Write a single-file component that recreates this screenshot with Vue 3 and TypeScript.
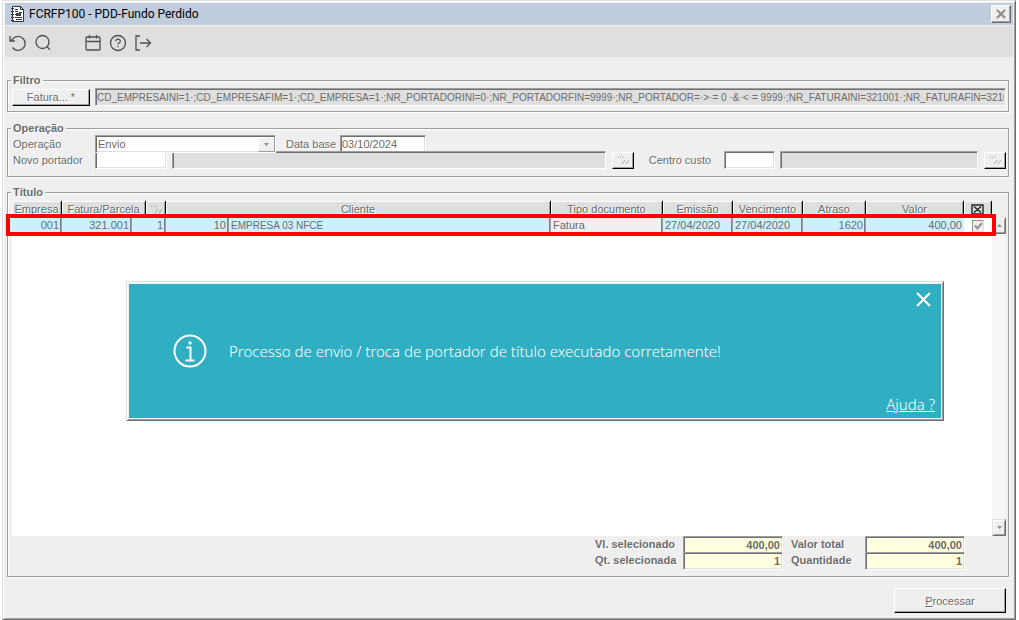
<script setup lang="ts">
import { ref } from 'vue'

interface Titulo {
  empresa: string
  fatura: string
  parcela: string
  codigo: string
  cliente: string
  tipo: string
  emissao: string
  vencimento: string
  atraso: string
  valor: string
  marcado: boolean
}

const filtro =
  'CD_EMPRESAINI=1·;CD_EMPRESAFIM=1·;CD_EMPRESA=1·;NR_PORTADORINI=0·;NR_PORTADORFIN=9999·;NR_PORTADOR=·>·= 0 ·&·<·= 9999·;NR_FATURAINI=321001·;NR_FATURAFIN=321001'

const operacao = ref('Envio')
const dataBase = ref('03/10/2024')
const portador = ref('')
const centro = ref('')
const avisoAberto = ref(true)

const titulos = ref<Titulo[]>([
  {
    empresa: '001',
    fatura: '321.001',
    parcela: '1',
    codigo: '10',
    cliente: 'EMPRESA 03 NFCE',
    tipo: 'Fatura',
    emissao: '27/04/2020',
    vencimento: '27/04/2020',
    atraso: '1620',
    valor: '400,00',
    marcado: true,
  },
])
</script>

<template>
  <main class="window">
    <header class="titlebar">
      <svg class="app-icon" viewBox="0 0 13 16" aria-hidden="true">
        <path d="M1.500 .5h8l3 3v12h-11z" fill="#fff" stroke="#333" />
        <path d="M9.500 .5v3h3M0 2.500h3M0 5.500h3M0 8.500h3M0 11.500h3M0 14.500h3M4 3.500h3M4 5.500h3M8 6.500h3M4 8.500h3M4 11.500h7M5 13.500h6" fill="none" stroke="#333" />
        <path d="M5 7h5v3h-5z" fill="#444" />
      </svg>
      <h1>FCRFP100 - PDD-Fundo Perdido</h1>
      <button type="button" class="close" aria-label="Fechar">
        <svg viewBox="0 0 10 10"><path d="M1 1l8 8M9 1l-8 8" stroke="#8d8d8d" stroke-width="2.200" /></svg>
      </button>
    </header>

    <nav class="toolbar" aria-label="Ferramentas">
      <button type="button" aria-label="Desfazer">
        <svg viewBox="0 0 18 18"><path d="M1 2v5h5M1.500 7l2.700-2.500A7 7 0 1 1 3.500 13.500" /></svg>
      </button>
      <button type="button" aria-label="Pesquisar">
        <svg viewBox="0 0 18 18"><circle cx="8.500" cy="8" r="6.500" /><path d="M13 12.800l3 3" /></svg>
      </button>
      <button type="button" class="spaced" aria-label="Calendário">
        <svg viewBox="0 0 18 18"><rect x="2" y="3" width="14" height="13" rx="1" /><path d="M2 7.500h14M5.500 1v3.500M12.500 1v3.500" /></svg>
      </button>
      <button type="button" aria-label="Ajuda">
        <svg viewBox="0 0 18 18"><circle cx="9" cy="9" r="7.500" /><path d="M6.800 7.300c0-3 4.700-3 4.500 0 0 1.500-2.300 1.500-2.300 3.200M9 12v1.300" /></svg>
      </button>
      <button type="button" aria-label="Sair">
        <svg viewBox="0 0 18 18"><path d="M6 2H2v14h4M6 9h10.500M12.500 5l4 4-4 4" /></svg>
      </button>
    </nav>

    <section class="group filter" aria-labelledby="t-filtro">
      <h2 id="t-filtro">Filtro</h2>
      <div class="line">
        <button type="button" class="push fatura">Fatura... *</button>
        <input class="field muted grow small" type="text" readonly :value="filtro" aria-label="Filtro de fatura" />
      </div>
    </section>

    <section class="group operation" aria-labelledby="t-operacao">
      <h2 id="t-operacao">Operação</h2>
      <div class="line">
        <label class="lead" for="operacao">Operação</label>
        <span class="select-box">
          <select id="operacao" v-model="operacao" class="field">
            <option>Envio</option>
          </select>
          <span class="drop" aria-hidden="true"><svg viewBox="0 0 7 4"><path d="M0 0h7L3.500 4z" /></svg></span>
        </span>
        <label class="date-label" for="data">Data base</label>
        <input id="data" v-model="dataBase" class="field date" type="text" />
      </div>
      <div class="line">
        <label class="lead" for="portador">Novo portador</label>
        <input id="portador" v-model="portador" class="field code" type="text" />
        <input class="field muted holder" type="text" readonly aria-label="Nome do portador" />
        <button type="button" class="push lookup" aria-label="Buscar portador">
          <svg viewBox="0 0 12 10"><path d="M1 2h1M4 1h1M3 3h1M6 2h1M5 9l3-4M9 9l3-4" /></svg>
        </button>
        <label class="cost-label" for="centro">Centro custo</label>
        <input id="centro" v-model="centro" class="field cost" type="text" />
        <input class="field muted center" type="text" readonly aria-label="Nome do centro de custo" />
        <button type="button" class="push lookup" aria-label="Buscar centro de custo">
          <svg viewBox="0 0 12 10"><path d="M1 2h1M4 1h1M3 3h1M6 2h1M5 9l3-4M9 9l3-4" /></svg>
        </button>
      </div>
    </section>

    <section class="group titles" aria-labelledby="t-titulo">
      <h2 id="t-titulo">Título</h2>
      <div class="grid-box">
        <div class="sheet">
          <table>
            <colgroup>
              <col class="c50" /><col class="c70" /><col class="c14" /><col class="c20" /><col class="c63" /><col />
              <col class="c112" /><col class="c70" /><col class="c70" /><col class="c63" /><col class="c98" /><col class="c28" />
            </colgroup>
            <thead>
              <tr>
                <th scope="col">Empresa</th>
                <th scope="col" colspan="2">Fatura/Parcela</th>
                <th scope="col" aria-label="Detalhe">
                  <svg class="mark" viewBox="0 0 12 10"><path d="M1 2h1M4 1h1M3 3h1M6 2h1M5 9l3-4M9 9l3-4" /></svg>
                </th>
                <th scope="col" colspan="2">Cliente</th>
                <th scope="col">Tipo documento</th>
                <th scope="col">Emissão</th>
                <th scope="col">Vencimento</th>
                <th scope="col">Atraso</th>
                <th scope="col">Valor</th>
                <th scope="col" aria-label="Selecionar">
                  <svg class="cross" viewBox="0 0 13 11"><path d="M1 1h11v9H1zM3 2.500l7 6M10 2.500l-7 6" /></svg>
                </th>
              </tr>
            </thead>
            <tbody>
              <tr v-for="t in titulos" :key="t.fatura">
                <td class="num">{{ t.empresa }}</td>
                <td class="num">{{ t.fatura }}</td>
                <td class="num" colspan="2">{{ t.parcela }}</td>
                <td class="num">{{ t.codigo }}</td>
                <td class="small">{{ t.cliente }}</td>
                <td class="plain">{{ t.tipo }}</td>
                <td>{{ t.emissao }}</td>
                <td>{{ t.vencimento }}</td>
                <td class="num">{{ t.atraso }}</td>
                <td class="num last">{{ t.valor }}</td>
                <td class="tick">
                  <label class="check">
                    <input v-model="t.marcado" type="checkbox" aria-label="Selecionar título" />
                    <svg v-if="t.marcado" viewBox="0 0 12 12" aria-hidden="true"><path d="M3 5.500l2.500 3L10 3" /></svg>
                  </label>
                </td>
              </tr>
            </tbody>
          </table>
          <div v-if="avisoAberto" class="notice" role="alertdialog" aria-label="Aviso">
            <svg class="info" viewBox="0 0 34 34" aria-hidden="true">
              <circle cx="17" cy="17" r="15.500" />
              <path d="M13.500 13.500h4v13M12.500 26.500h9" />
              <circle class="dot" cx="17" cy="9" r="1.700" />
            </svg>
            <p>Processo de envio / troca de portador de título executado corretamente!</p>
            <button type="button" class="dismiss" aria-label="Fechar aviso" @click="avisoAberto = false">
              <svg viewBox="0 0 14 14"><path d="M1 1l12 12M13 1L1 13" /></svg>
            </button>
            <a href="#ajuda">Ajuda ?</a>
          </div>
        </div>
        <div class="scroll">
          <button type="button" aria-label="Rolar para cima"><svg viewBox="0 0 7 4"><path d="M0 4h7L3.500 0z" /></svg></button>
          <button type="button" aria-label="Rolar para baixo"><svg viewBox="0 0 7 4"><path d="M0 0h7L3.500 4z" /></svg></button>
        </div>
        <div class="highlight"></div>
      </div>
      <div class="totals">
        <label for="vlsel">Vl. selecionado</label>
        <input id="vlsel" class="field total" type="text" readonly value="400,00" />
        <label for="vltot">Valor total</label>
        <input id="vltot" class="field total" type="text" readonly value="400,00" />
        <label for="qtsel">Qt. selecionada</label>
        <input id="qtsel" class="field total" type="text" readonly value="1" />
        <label for="qttot">Quantidade</label>
        <input id="qttot" class="field total" type="text" readonly value="1" />
      </div>
    </section>

    <footer class="actions">
      <button type="button" class="push process"><span><u>P</u>rocessar</span></button>
    </footer>
  </main>
</template>

<style>
body {
  margin: 0;
  background: #fff;
}
</style>

<style scoped>
* {
  box-sizing: border-box;
}
.window {
  display: flex;
  flex-direction: column;
  min-height: 100vh;
  margin: 0 3px 0 2px;
  padding: 1px;
  background: #efefef;
  border: 1px solid;
  border-color: #dfdfdf #6f6f6f #6f6f6f #dfdfdf;
  box-shadow: inset 1px 1px #fff, inset -1px -1px #9f9f9f;
  color: #6b6b6b;
  font: 11px/16px "Liberation Sans", Arial, sans-serif;
}
button,
input,
select {
  margin: 0;
  padding: 0;
  color: inherit;
  font: inherit;
  border-radius: 0;
}
svg {
  display: block;
}
.titlebar {
  display: flex;
  align-items: center;
  height: 22px;
  margin: 1px 1px 0;
  padding: 0 2px 0 6px;
  background: #bfcddf;
}
.app-icon {
  width: 13px;
  height: 16px;
}
h1 {
  flex: 1;
  margin: 0 0 0 5px;
  color: #000;
  font: 400 12px/20px Roboto, "Noto Sans", sans-serif;
}
.close {
  display: grid;
  place-items: center;
  width: 20px;
  height: 18px;
  background: #efefef;
  border: 1px solid;
  border-color: #fff #6f6f6f #6f6f6f #fff;
  box-shadow: inset -1px -1px #9f9f9f;
}
.close svg {
  width: 10px;
  height: 10px;
}
.toolbar {
  display: flex;
  align-items: center;
  gap: 7px;
  height: 31px;
  margin: 1px 1px 0;
  padding: 3px 4px 0;
  background: #dfdfdf;
}
.toolbar button {
  background: none;
  border: 0;
}
.toolbar .spaced {
  margin-left: 25px;
}
.toolbar svg {
  width: 18px;
  height: 18px;
  fill: none;
  stroke: #4f4f4f;
  stroke-width: 1.3;
}
.group {
  position: relative;
  margin: 0 5px 0 3px;
  padding: 0 2px 0 4px;
  border: 1px solid #9f9f9f;
  box-shadow: 1px 1px #fff, inset 1px 1px #fff;
}
h2 {
  position: absolute;
  top: -9px;
  left: 3px;
  margin: 0;
  padding: 0 2px;
  background: #efefef;
  font: inherit;
  font-weight: 700;
}
h2,
label,
th,
.push {
  text-shadow: 1px 1px #fff;
}
.filter {
  margin-top: 23px;
  padding-top: 7px;
  padding-bottom: 5px;
}
.operation {
  margin-top: 16px;
  padding-top: 7px;
  padding-bottom: 8px;
}
.titles {
  display: flex;
  flex: 1;
  flex-direction: column;
  margin-top: 15px;
  padding-top: 8px;
  padding-bottom: 8px;
}
.line {
  display: flex;
  align-items: center;
}
.operation .line {
  height: 16px;
}
.push {
  background: #efefef;
  border: 1px solid;
  border-color: #fff #000 #000 #fff;
  box-shadow: inset -1px -1px #9f9f9f;
}
.fatura {
  width: 78px;
  height: 17px;
  margin-right: 5px;
  line-height: 14px;
}
.field {
  height: 18px;
  padding: 0 1px;
  background: #fff;
  border: 1px solid;
  border-color: #9f9f9f #fff #fff #9f9f9f;
  box-shadow: inset 1px 1px #6f6f6f, inset -1px -1px #dfdfdf;
  outline: 0;
}
.field.muted {
  background: #dfdfdf;
}
.small {
  font-size: 10px;
}
.grow {
  flex: 1;
  min-width: 0;
}
.lead {
  flex: none;
  width: 83px;
  padding-left: 1px;
  white-space: nowrap;
}
.select-box {
  position: relative;
  width: 181px;
}
.select-box select {
  display: block;
  width: 100%;
  padding-left: 2px;
  appearance: none;
}
.drop {
  position: absolute;
  top: 2px;
  right: 1px;
  display: grid;
  place-items: center;
  width: 17px;
  height: 15px;
  background: #efefef;
  border: 1px solid;
  border-color: #fff #9f9f9f #9f9f9f #fff;
  pointer-events: none;
}
.drop svg,
.scroll svg {
  width: 5px;
  height: 3px;
  fill: #8f8f8f;
}
.date-label {
  width: 54px;
  margin-left: 10px;
  white-space: nowrap;
}
.date {
  width: 86px;
}
.code {
  flex: none;
  width: 72px;
  margin-right: 5px;
}
.holder {
  flex: 436 1 0;
  min-width: 0;
}
.center {
  flex: 197 1 0;
  min-width: 0;
}
.lookup {
  display: grid;
  flex: none;
  place-items: center;
  width: 22px;
  height: 17px;
  margin-left: 6px;
}
.lookup svg,
.mark {
  width: 12px;
  height: 10px;
  fill: none;
  stroke: #a5a5a5;
}
.cost-label {
  flex: none;
  width: 75px;
  margin-left: 15px;
  white-space: nowrap;
}
.cost {
  flex: none;
  width: 51px;
  margin-right: 5px;
}
.grid-box {
  position: relative;
  display: flex;
  flex: 1;
}
.sheet {
  position: relative;
  flex: 1;
  min-height: 240px;
  background: #fff;
}
table {
  width: 100%;
  table-layout: fixed;
  border-collapse: separate;
  border-spacing: 0;
}
.c14 { width: 14px; }
.c20 { width: 20px; }
.c28 { width: 28px; }
.c50 { width: 50px; }
.c63 { width: 63px; }
.c70 { width: 70px; }
.c98 { width: 98px; }
.c112 { width: 112px; }
th {
  height: 16px;
  padding: 0;
  background: #dfdfdf;
  border-right: 1px solid #000;
  box-shadow: inset 1px 1px #fff, inset -1px 0 #9f9f9f;
  font-weight: 400;
  line-height: 16px;
  white-space: nowrap;
}
.mark,
.cross {
  margin: 0 auto;
}
.cross {
  width: 13px;
  height: 11px;
  fill: none;
  stroke: #222;
  stroke-width: 1.4;
}
td {
  height: 17px;
  padding: 0 2px;
  background: #cfefff;
  border-right: 1px solid #9f9f9f;
  box-shadow: inset -1px 0 #7f7f7f;
  line-height: 17px;
  white-space: nowrap;
}
.num {
  text-align: right;
}
.plain {
  background: #efefef;
}
.last,
.tick {
  border-right: 0;
  box-shadow: none;
}
.tick {
  background: #fff;
}
.check {
  display: grid;
  width: 12px;
  height: 12px;
  margin: 0 auto;
}
.check > * {
  grid-area: 1 / 1;
}
.check input {
  width: 12px;
  height: 12px;
  appearance: none;
  background: #efefef;
  border: 1px solid;
  border-color: #8f8f8f #dfdfdf #dfdfdf #8f8f8f;
}
.check svg {
  width: 12px;
  height: 12px;
  fill: none;
  stroke: #8f8f8f;
  stroke-width: 2;
  pointer-events: none;
}
.highlight {
  position: absolute;
  top: 13px;
  left: -6px;
  right: 10px;
  height: 22px;
  border: 4px solid #f00;
  pointer-events: none;
}
.scroll {
  display: flex;
  flex-direction: column;
  justify-content: space-between;
  width: 14px;
  margin-top: 16px;
  background: repeating-conic-gradient(#fff 0 25%, #efefef 0 50%) 0 0 / 2px 2px;
}
.scroll button {
  display: grid;
  place-items: center;
  width: 14px;
  height: 17px;
  background: #efefef;
  border: 1px solid;
  border-color: #dfdfdf #6f6f6f #6f6f6f #dfdfdf;
  box-shadow: inset 1px 1px #fff, inset -1px -1px #9f9f9f;
}
.notice {
  position: absolute;
  top: 80px;
  left: 114px;
  right: 48px;
  display: flex;
  align-items: center;
  height: 140px;
  padding-left: 45px;
  background: #2fafc1;
  border: 1px solid;
  border-color: #dfdfdf #6f6f6f #6f6f6f #dfdfdf;
  box-shadow: inset 1px 1px #fff, inset -1px -1px #9f9f9f, inset 2px 2px #efefef, inset -2px -2px #efefef;
  color: #fff;
  font: 300 15px/20px "Noto Sans", "Open Sans", sans-serif;
}
.notice svg {
  fill: none;
  stroke: #fff;
  stroke-width: 2;
}
.notice .info {
  width: 36px;
  height: 34px;
}
.info .dot {
  fill: #fff;
  stroke: none;
}
.notice p {
  margin: 0 0 0 21px;
}
.dismiss {
  position: absolute;
  top: 10px;
  right: 12px;
  background: none;
  border: 0;
}
.dismiss svg {
  width: 15px;
  height: 15px;
}
.notice a {
  position: absolute;
  right: 8px;
  bottom: 6px;
  color: #fff;
}
.totals {
  display: grid;
  grid-template-columns: 88px 100px 74px 100px;
  grid-auto-rows: 16px;
  column-gap: 4px;
  justify-content: end;
  margin-right: 41px;
  font-weight: 700;
}
.totals label {
  padding-left: 4px;
  white-space: nowrap;
}
.total {
  width: 100%;
  padding-right: 2px;
  background: #ffffdf;
  text-align: right;
}
.actions {
  display: flex;
  justify-content: flex-end;
  padding: 11px 8px 5px;
}
.process {
  width: 112px;
  height: 25px;
}
</style>
